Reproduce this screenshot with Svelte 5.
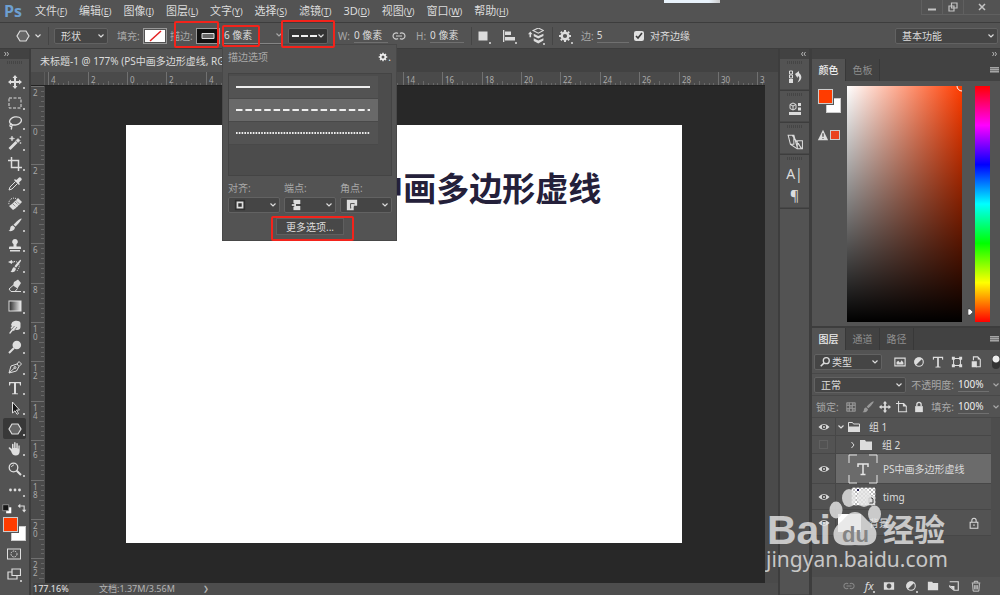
<script>
    const menus = [
        ['文件', 'F'], ['编辑', 'E'], ['图像', 'I'], ['图层', 'L'], ['文字', 'Y'], ['选择', 'S'],
        ['滤镜', 'T'], ['3D', 'D'], ['视图', 'V'], ['窗口', 'W'], ['帮助', 'H']
    ];

    // Icons are drawn on a 14 x 14 grid
    const icons = {
        move: '<path d="M7 0l2.500 3H8v3h3V4.500L14 7l-3 2.500V8H8v3h1.500L7 14l-2.500-3H6V8H3v1.500L0 7l3-2.500V6h3V3H4.500z"/>',
        marquee: '<rect x="1" y="2" width="12" height="10" fill="none" stroke="currentColor" stroke-dasharray="3 1.500"/>',
        lasso: '<g fill="none" stroke="currentColor" stroke-width="1.300"><ellipse cx="7.500" cy="5" rx="6" ry="4" transform="rotate(-12 7 5)"/><path d="M3 8c-2 1-1 3 .5 2.500S4 8 2.500 8M3.500 10.500c.5 1 .3 2-.5 3"/></g>',
        wand: '<path d="M0.500 12L7.500 5l2 2-7 7z"/><path d="M8 4.500L10 2.500l2 2L10 6.500zM4 0l.6 1.900L6.500 2.500l-1.900.6L4 5l-.6-1.900L1.500 2.500l1.900-.6zM12.500 0v2M11.500 1h2M12.500 6v2M11.500 7h2" stroke="currentColor" stroke-width=".6"/>',
        crop: '<path d="M3.500 0v10.500H14M0 3.500h10.500V14" fill="none" stroke="currentColor" stroke-width="1.500"/>',
        eyedropper: '<path d="M8 3l1-.5L10.500 1a1.800 1.800 0 0 1 2.600 2.600L11.500 5 11 6l1 1-1 1-5-5 1-1z"/><path d="M7.500 4.500L2 10l-1 3 3-1 5.500-5.500" fill="none" stroke="currentColor"/>',
        heal: '<path d="M4 7L10 1l4 4-6 6-3 2-4-4z" /><path d="M5 7l4 4M7 5l4 4M8 3.500l4 4" stroke="#666" stroke-dasharray="1 1"/><path d="M8 1.500C4 0 0 3 1 8" fill="none" stroke="currentColor" stroke-dasharray="1 1"/>',
        brush: '<path d="M13.500.5c.8.8-4.500 6.700-6 8L5.500 6.700C7 5 12.500-.3 13.500.5zM5 7.500l2 2C6.500 13 3 13.500.5 13c2-1 1.500-2.500 2-4 .5-1 1.500-1.500 2.500-1.500z"/>',
        stamp: '<path d="M7 1a2.800 2.800 0 0 1 1.500 5.200V8.500H12a1 1 0 0 1 1 1V11H1V9.500a1 1 0 0 1 1-1h3.500V6.200A2.800 2.800 0 0 1 7 1zM2 12h10v1.500H2z"/>',
        history: '<path d="M13 .8c.8.8-3.500 6.700-5 8L6.500 7.300C8 5.500 12 0 13 .8zM6 8l2 1.800C7.500 13 5 13.500 2.500 13c1.500-1 1.500-4 3.500-5zM0 3l4-2v1.200l3 .8-3 .8V5z"/><path d="M6 2.500C9 2 12 5 11 8.500L9 12" fill="none" stroke="currentColor" stroke-dasharray="1 1"/>',
        eraser: '<path d="M6 3l4-2.500L13 4 9.500 9.500 5 6.500z"/><path d="M5 6.500L1 10l2 2.500h4l2.500-3M3 12.500h10" fill="none" stroke="currentColor"/>',
        gradient: '<defs><linearGradient id="toolGradient"><stop stop-color="#292929"/><stop offset="1" stop-color="#eee"/></linearGradient></defs><rect x="1" y="2" width="12" height="10" fill="url(#toolGradient)" stroke="currentColor"/>',
        smudge: '<path d="M4 2.500C6 0 12 0 12.500 3v4c0 2-2 3.500-4 3L7 9.500 6 11l-1-.5-3 3.500-.8-1L4 9 2.500 8 4 6 3 5z"/><path d="M6.500 6L4 9M9 7l-2 2.500" stroke="#555" stroke-width=".7"/>',
        dodge: '<circle cx="8.800" cy="5" r="4.300"/><path d="M6 8l-5 5" stroke="currentColor" stroke-width="2"/>',
        pen: '<g fill="none" stroke="currentColor"><path d="M1 13l2-7 6-2 2 2.500L8.500 11zM9 4l2-2.500 2.500 2.500L11 6.500M1 13l5.500-5"/><circle cx="7" cy="7.500" r="1"/></g>',
        type: '<path d="M1 1h12v3.500h-1L11.500 2.300H8v9.900l2 .3v.8H4v-.8l2-.3V2.300H2.500L2 4.500H1z"/>',
        select: '<path d="M4.500 1l7 8H8.500l2 3.500-1.500.8-2-3.500L4.500 12z" fill="#171717" stroke="currentColor"/>',
        shape: '<path d="M4 2h6l3 5-3 5H4L1 7z" fill="#666" stroke="currentColor" stroke-width="1.200"/>',
        hand: '<path d="M3 9L.8 6.500c-.6-1 .6-1.600 1.200-1L4 7V2.500c0-1 1.400-1 1.500 0V6h.6V1c0-1.200 1.500-1.200 1.500 0v5h.7V1.800c0-1 1.400-1 1.500 0V6.500h.6V4c0-1 1.300-1 1.300 0v5c0 3-1.500 4.500-4 4.500S4 12 3 9z"/>',
        zoom: '<circle cx="5.500" cy="5.500" r="4.300" fill="none" stroke="currentColor" stroke-width="1.300"/><path d="M3.500 5C4 3.500 5 3 6 3" fill="none" stroke="currentColor"/><path d="M8.700 8.700L13 13" stroke="currentColor" stroke-width="2"/>',
        more: '<circle cx="2.500" cy="7" r="1.400"/><circle cx="7" cy="7" r="1.400"/><circle cx="11.500" cy="7" r="1.400"/>',
        mask: '<g fill="none" stroke="currentColor"><rect x=".5" y="2" width="13" height="10"/><circle cx="7" cy="7" r="3" stroke-dasharray="1.500 1"/></g>',
        screen: '<g fill="#535353" stroke="currentColor" stroke-width="1.200"><path d="M1 5h9v7H1z"/><path d="M5 2h8.500v6.500H5z"/></g>',
        swap: '<path d="M4 3.500h5.500v5" fill="none" stroke="currentColor" stroke-width="1.300"/><path d="M5 1v5L2 3.500zM7 8h5l-2.500 3z"/>',
        defaults: '<path d="M6 5h6v7H6z" fill="#fff"/><path d="M2 2h7v7H2z" fill="#171717" stroke="#999"/>',
        link: '<g fill="none" stroke="currentColor" stroke-width="1.200"><path d="M6 4.500C5 3.500 1 3.500 1 7s4 3.500 5 2.500M8 4.500c1-1 5-1 5 2.500s-4 3.500-5 2.500M4 7h6"/></g>',
        square: '<path d="M2.500 2.500h9v9h-9z"/>',
        align: '<path d="M1 1h1.300v12H1zM3 2.500h6v3.500H3zM3 8h10v3.500H3z"/>',
        arrange: '<path d="M9 0l4.500 2.200L9 4.500 4.500 2.200z" fill="none" stroke="currentColor"/><path d="M5 5l4 2 4.500-2v2L9 9.200 5 7.300zM5 9l4 2 4.500-2v2L9 13.500 5 11.300zM0 5.500L2 3l2 2.500H2.700V8H1.300V5.500z"/>',
        gear: '<circle cx="7" cy="7" r="3.300" fill="none" stroke="currentColor" stroke-width="2.400"/><g stroke="currentColor" stroke-width="2"><path d="M7 1v2M7 11v2M1 7h2M11 7h2M2.800 2.800L4 4M10 10l1.200 1.200M2.800 11.200L4 10M10 4l1.200-1.200"/></g>',
        historyPanel: '<g fill="none" stroke="currentColor"><path d="M1.500 1h3v3h-3zM1.500 5h3v3h-3z"/></g><path d="M1 9h4v4H1zM7 4l4-3v2c4 3 2.500 8-1.500 9.500 2-3 2.500-5.500.5-6.500L9.500 8z"/>',
        properties: '<path d="M5 1l3 1.500v4L5 8 2 6.500v-4zM2 2.500L5 4l3-1.500M5 4v4" fill="none" stroke="currentColor"/><path d="M10 1h3v3h-3zM10 5.500h3v3h-3zM1 10h12v3H1z"/>',
        copySource: '<g fill="none" stroke="currentColor" stroke-width=".9"><path d="M1 1h5v8H3zM6 1l3 11M9 6h4.500v7H9zM3 9l6 4M4.500 1L13 13M10 8l2 4"/></g>',
        image: '<path d="M1 2.500h12v9H1z" fill="none" stroke="currentColor" stroke-width="1.300"/><path d="M3 10V7l2-1.500L7 8l2-3 2 3v2z"/>',
        adjust: '<circle cx="7" cy="7" r="5" fill="none" stroke="currentColor" stroke-width="1.300"/><path d="M10.800 3.200a5.300 5.300 0 0 1-7.600 7.600z" transform="rotate(180 7 7)"/>',
        bounds: '<path d="M3 3h8v8H3z" fill="none" stroke="currentColor" stroke-width="1.200"/><path d="M1 1h3.500v3.500H1zM9.500 1H13v3.500H9.500zM1 9.500h3.500V13H1zM9.500 9.500H13V13H9.500z"/>',
        smart: '<path d="M4 5V1h5l3 3v8.500H7" fill="none" stroke="currentColor" stroke-width="1.300"/><path d="M2 6h6v7H2zM9 1v3h3z"/>',
        pixels: '<path d="M2 2h10v10H2zM2 5.300h10M2 8.600h10M5.300 2v10M8.600 2v10" fill="none" stroke="currentColor"/><path d="M2 2h3.300v3.300H2zM8.600 2H12v3.300H8.600zM5.300 5.300h3.300v3.300H5.300zM2 8.600h3.300V12H2zM8.600 8.600H12V12H8.600z" opacity=".5"/>',
        artboard: '<path d="M3 0v12.500h10M0 3h9l3 3v7" fill="none" stroke="currentColor" stroke-width="1.200"/><path d="M8 2.500l4.500 4H8z"/>',
        lock: '<path d="M2.500 6h9v7h-9z"/><path d="M4.500 6V4a2.500 2.500 0 0 1 5 0v2" fill="none" stroke="currentColor" stroke-width="1.500"/>',
        lockLine: '<path d="M2.500 6h9v7h-9zM4.500 6V4a2.500 2.500 0 0 1 5 0v2M7 8.500v2" fill="none" stroke="currentColor" stroke-width="1.200"/>',
        eye: '<path d="M.5 7Q7 0 13.500 7 7 14 .5 7z"/><circle cx="7" cy="7" r="2.600" fill="#484848"/><circle cx="7" cy="7" r="1.100"/>',
        folder: '<path d="M1 2h5l1 1.500h6V12H1z"/>',
        folderOpen: '<path d="M1.500 11.500v-9h4L6.500 4h6v7.500z" fill="none" stroke="currentColor"/><path d="M1 6.500h12V12H1z"/>',
        addMask: '<path fill-rule="evenodd" d="M1 2.500h12v9H1zM7 4.200a2.800 2.800 0 1 0 .01 0z"/>',
        newLayer: '<path d="M2 2h10v10H7L2 8V6" fill="none" stroke="currentColor" stroke-width="1.300"/><path d="M2 7h5.500v5z"/>',
        trash: '<path d="M2 3.500h10M5 3V1.500h4V3M3 4l.7 9h6.600L11 4M5.500 6v5M7 6v5M8.500 6v5" fill="none" stroke="currentColor"/>',
        warning: '<path d="M7 1l6 12H1z"/><path d="M7 5v4M7 10.500v1" stroke="#444" stroke-width="1.500"/>',
        search: '<circle cx="8.500" cy="5.500" r="3.500" fill="none" stroke="currentColor" stroke-width="1.500"/><path d="M6 8l-4 4" stroke="currentColor" stroke-width="1.800"/>',
        alignIn: '<path d="M1 1h12v12H1z" fill="#303030"/><path d="M4 4h6v6H4z" fill="none" stroke="currentColor" stroke-width="2"/>',
        cap: '<path d="M4 1h8v12H4z"/><path d="M7 6h6v2H7z" fill="#303030"/><path d="M1 5h4v4H1z" fill="#303030"/><path d="M2 6h4v2H2z"/>',
        corner: '<path d="M1 1h12v7H9v5H1z"/><path d="M5 5h5v1H6v5H5z" fill="#303030"/><path d="M6 6h3v3H6z"/>'
    };

    const tools = [
        ['move', '移动'], ['marquee', '矩形选框'], ['lasso', '套索'], ['wand', '魔棒'], ['crop', '裁剪'],
        ['eyedropper', '吸管'], ['heal', '修复画笔'], ['brush', '画笔'], ['stamp', '仿制图章'],
        ['history', '历史记录画笔'], ['eraser', '橡皮擦'], ['gradient', '渐变'], ['smudge', '涂抹'],
        ['dodge', '减淡'], ['pen', '钢笔'], ['type', '文字'], ['select', '路径选择'], ['shape', '多边形'],
        ['hand', '抓手'], ['zoom', '缩放'], ['more', '更多']
    ];

    // Ruler: one major mark every two units
    const STEP = 39.4;
    const minor = [1, 2, 3, 4, 5, 6, 7];
    const digits = (n) => String(Math.abs(n * 2)).split('');
    const markList = (from, length, origin) =>
        Array.from({ length: Math.max(0, Math.ceil((length - origin - 4) / STEP) - from) }, (_, i) => i + from);

    let viewWidth = $state(734);
    let viewHeight = $state(511);
    let marks = $derived(markList(-2, viewWidth - 13, 96));
    let vMarks = $derived(markList(-1, viewHeight - 14, 39));

    let strokeWidth = $state('6 像素');
    let width = $state('0 像素');
    let height = $state('0 像素');
    let sides = $state('5');
    let alignEdges = $state(true);
    let strokeStyle = $state('dash');
</script>

{#snippet icon(name, size = 14)}
    <svg class="icon" width={size} height={size} viewBox="0 0 14 14" fill="currentColor" aria-hidden="true">
        {@html icons[name]}
    </svg>
{/snippet}

{#snippet chevron()}
    <svg class="chevron" width="6" height="4" viewBox="0 0 6 4" aria-hidden="true">
        <path d="M.5 .5L3 3 5.500 .5" fill="none" stroke="currentColor" stroke-width="1.200" />
    </svg>
{/snippet}

{#snippet arrows(left)}
    <svg width="5" height="4" viewBox="0 0 5 4" aria-hidden="true">
        <path d={left ? 'M2 0L.5 2 2 4M4.500 0L3 2l1.500 2' : 'M.5 0L2 2 .5 4M3 0l1.500 2L3 4'} fill="none" stroke="#c4c4c4" stroke-width=".9" />
    </svg>
{/snippet}

{#snippet burger()}
    <button class="burger" aria-label="面板菜单"><svg width="9" height="7"><path d="M0 0h9v6H0z" fill="#777" /><path d="M0 .5h9M0 2.500h9M0 4.500h9" stroke="#a5a5a5" /></svg></button>
{/snippet}

<div class="app">
    <header class="menubar">
        <span class="logo">Ps</span>
        <nav>
            {#each menus as [name, key]}
                <button>{name}<small>(<u>{key}</u>)</small></button>
            {/each}
        </nav>
        <div class="window-buttons">
            <button aria-label="最小化"><svg width="10" height="10"><path d="M1 7.500h8" stroke="#c4c4c4" stroke-width="2" /></svg></button>
            <button aria-label="还原"><svg width="10" height="10"><path d="M3.500 1h5.500v5H3.500zM1 4h5v5H1z" fill="#535353" stroke="#c4c4c4" stroke-width="1.200" /></svg></button>
            <button aria-label="关闭"><svg width="10" height="10"><path d="M2 2l6 6M8 2L2 8" stroke="#c4c4c4" stroke-width="1.500" /></svg></button>
        </div>
    </header>

    <div class="options">
        <button class="preset" aria-label="工具预设">{@render icon('shape')}{@render chevron()}</button>
        <span class="drop mode">
            <select aria-label="工具模式"><option>形状</option></select>
            {@render chevron()}
        </span>
        <div class="field fill-field">
            填充:
            <button class="swatch" aria-label="填充颜色">
                <svg width="20" height="12"><path d="M0 0h20v12H0z" fill="#fff" /><path d="M5 11L16 1" stroke="#e32020" stroke-width="1.500" /></svg>
            </button>
        </div>
        <div class="field stroke-field">
            描边:
            <button class="swatch dark" aria-label="描边颜色">
                <svg width="20" height="12"><path d="M0 0h20v12H0z" fill="#111" /><path d="M4 3.500h12v5H4z" fill="#666" stroke="#ddd" /></svg>
            </button>
        </div>
        <span class="line-input stroke-width">
            <input aria-label="描边宽度" bind:value={strokeWidth} />
            {@render chevron()}
        </span>
        <span class="drop style">
            <select aria-label="描边类型" bind:value={strokeStyle}>
                <option value="solid" aria-label="实线"></option>
                <option value="dash" aria-label="虚线"></option>
                <option value="dot" aria-label="点线"></option>
            </select>
            <svg class="glyph" width="26" height="4"><path d="M0 2h25" stroke="#eee" stroke-width="2" stroke-dasharray="7 2" /></svg>
            {@render chevron()}
        </span>
        <label class="field size">W: <input bind:value={width} /></label>
        <button class="link" aria-label="链接宽高">{@render icon('link')}</button>
        <label class="field size">H: <input bind:value={height} /></label>
        <div class="ops">
            <button class="corner" aria-label="路径操作">{@render icon('square')}</button>
            <button class="corner" aria-label="路径对齐">{@render icon('align')}</button>
            <button class="corner" aria-label="路径排列">{@render icon('arrange', 16)}</button>
        </div>
        <button class="corner" aria-label="设置">{@render icon('gear')}</button>
        <label class="field sides">边: <input bind:value={sides} /></label>
        <label class="field check"><input type="checkbox" bind:checked={alignEdges} /> 对齐边缘</label>
        <span class="drop workspace-select">
            <select aria-label="工作区"><option>基本功能</option></select>
            {@render chevron()}
        </span>
    </div>

    <div class="workspace">
        <aside class="toolbar">
            <div class="strip left">{@render arrows(false)}</div>
            <div class="grip"></div>
            <div class="tools">
                {#each tools as [name, label]}
                    <button class:active={name === 'shape'} class="corner" aria-label={label}>{@render icon(name)}</button>
                {/each}
            </div>
            <div class="swap">
                <button aria-label="默认颜色">{@render icon('defaults', 12)}</button>
                <button aria-label="切换颜色">{@render icon('swap', 12)}</button>
            </div>
            <div class="colors"><i class="bg"></i><i class="fg"></i></div>
            <button class="below" aria-label="快速蒙版">{@render icon('mask')}</button>
            <button class="below corner" aria-label="屏幕模式">{@render icon('screen')}</button>
        </aside>

        <main class="document">
            <div class="tabs"><div class="tab">未标题-1 @ 177% (PS中画多边形虚线, RGB/8#)</div></div>
            <div class="view" bind:clientWidth={viewWidth} bind:clientHeight={viewHeight}>
                <svg class="ruler-top">
                    <path d="M13.500 0v14" stroke="#5c5c5c" />
                    {#each marks as m}
                        {@const x = Math.round(96 + m * STEP)}
                        <path d="M{x + 0.5} 0v14" stroke="#707070" />
                        <text x={x + 3} y="11">{Math.abs(m * 2)}</text>
                        {#each minor as k}
                            <path d="M{Math.round(x + (k * STEP) / 8) + 0.5} {k === 4 ? 9 : 11}V14" stroke="#686868" />
                        {/each}
                    {/each}
                </svg>
                <div class="ruler-left">
                    <svg>
                        {#each vMarks as m}
                            {@const y = Math.round(39 + m * STEP)}
                            <path d="M0 {y + 0.5}h13" stroke="#707070" />
                            {#each digits(m) as d, i}
                                <text x="2" y={y + 10 + i * 8}>{d}</text>
                            {/each}
                            {#each minor as k}
                                <path d="M{k === 4 ? 8 : 10} {Math.round(y + (k * STEP) / 8) + 0.5}H13" stroke="#686868" />
                            {/each}
                        {/each}
                    </svg>
                </div>
                <div class="canvas">
                    <div class="artboard"><h1>PS中画多边形虚线</h1></div>
                </div>
            </div>
            <footer class="status">
                <input aria-label="缩放比例" value="177.16%" />
                <span>文档:1.37M/3.56M</span>
                <button aria-label="状态选项">❯</button>
            </footer>
        </main>

        <aside class="dock">
            <div class="strip">{@render arrows(true)}</div>
            <div class="group"><div class="grip"></div><button aria-label="历史记录">{@render icon('historyPanel')}</button></div>
            <div class="group"><div class="grip"></div><button aria-label="属性">{@render icon('properties')}</button></div>
            <div class="group"><div class="grip"></div><button aria-label="仿制源">{@render icon('copySource', 16)}</button></div>
            <div class="group text-group"><div class="grip"></div><button class="glyph-button">A|</button><button class="glyph-button">¶</button></div>
            <div class="group rest"></div>
        </aside>

        <aside class="panels">
            <div class="strip">{@render arrows(false)}</div>
            <section>
                <div class="panel-tabs">
                    <button class="on">颜色</button><button>色板</button>
                    {@render burger()}
                </div>
                <div class="color-body">
                    <div class="current">
                        <div class="colors"><i class="bg"></i><i class="fg"></i></div>
                        <div class="gamut">{@render icon('warning', 12)}<i></i></div>
                    </div>
                    <div class="field-2d">
                        <svg width="6" height="6"><path d="M1 0a5 5 0 0 0 5 5" fill="none" stroke="#fff" /></svg>
                    </div>
                    <div class="hue"><svg width="6" height="8"><path d="M0 1h2l3 3-3 3H0z" fill="#fff" stroke="#222" stroke-width=".5" /></svg></div>
                </div>
            </section>
            <section class="layers">
                <div class="panel-tabs">
                    <button class="on">图层</button><button>通道</button><button>路径</button>
                    {@render burger()}
                </div>
                <div class="row filter">
                    <span class="drop kind">
                        <span class="lens">{@render icon('search', 12)}</span>
                        <select aria-label="图层过滤"><option>类型</option></select>
                        {@render chevron()}
                    </span>
                    <div class="filter-icons">
                        {#each ['image', 'adjust', 'type', 'bounds', 'smart'] as name}
                            <button aria-label={name}>{@render icon(name, 12)}</button>
                        {/each}
                    </div>
                    <i class="toggle"></i>
                </div>
                <div class="row">
                    <span class="drop blend">
                        <select aria-label="混合模式"><option>正常</option></select>
                        {@render chevron()}
                    </span>
                    <label class="percent">不透明度: <input value="100%" />{@render chevron()}</label>
                </div>
                <div class="row">
                    <span class="lock-label">锁定:</span>
                    <div class="locks">
                        {#each ['pixels', 'brush', 'move', 'artboard', 'lock'] as name, i}
                            <button class:off={i < 2} aria-label={name}>{@render icon(name, 12)}</button>
                        {/each}
                    </div>
                    <label class="percent">填充: <input value="100%" />{@render chevron()}</label>
                </div>
                <ul class="list">
                    <li>
                        <button class="vis" aria-label="可见">{@render icon('eye', 12)}</button>
                        <div class="item">{@render chevron()}{@render icon('folderOpen')}<span class="name">组 1</span></div>
                    </li>
                    <li>
                        <button class="vis" aria-label="隐藏"><i class="empty"></i></button>
                        <div class="item nested"><svg width="4" height="8"><path d="M.5 1L3 4 .5 7" fill="none" stroke="#ddd" /></svg>{@render icon('folder')}<span class="name">组 2</span></div>
                    </li>
                    <li class="tall selected">
                        <button class="vis" aria-label="可见">{@render icon('eye', 12)}</button>
                        <div class="item thumb">
                            <svg width="30" height="30" fill="none" stroke="#e6e6e6"><path d="M1 9V1h8M21 1h8v8M29 21v8h-8M9 29H1v-8" /><path d="M10 13v-3h10v3M15 10v11M12.500 20.500h5" stroke-width="1.500" /></svg>
                            <span class="name">PS中画多边形虚线</span>
                        </div>
                    </li>
                    <li class="mid">
                        <button class="vis" aria-label="可见">{@render icon('eye', 12)}</button>
                        <div class="item thumb timg">
                            <svg width="25" height="19">
                                <defs><pattern id="checker" width="4" height="4" patternUnits="userSpaceOnUse"><path d="M0 0h4v4H0z" fill="#fff" /><path d="M0 0h2v2H0zM2 2h2v2H2z" fill="#bbb" /></pattern></defs>
                                <path d="M0 0h25v19H0z" fill="url(#checker)" stroke="#222" /><path d="M6 2h2v2H6z" fill="#222050" />
                                <path d="M15 9h9v9h-9z" fill="#ddd" /><path d="M18 16v-5h3l1 1v4z" fill="none" stroke="#444" />
                            </svg>
                            <span class="name">timg</span>
                        </div>
                    </li>
                    <li class="mid">
                        <button class="vis" aria-label="可见">{@render icon('eye', 12)}</button>
                        <div class="item back"><i class="white"></i><span class="name">背景</span><span class="locked">{@render icon('lockLine', 12)}</span></div>
                    </li>
                </ul>
                <div class="layer-actions">
                    <button class="dim" aria-label="链接图层">{@render icon('link', 12)}</button>
                    <button class="corner fx">fx</button>
                    <button aria-label="蒙版">{@render icon('addMask', 12)}</button>
                    <button class="corner" aria-label="调整图层">{@render icon('adjust', 12)}</button>
                    <button aria-label="新建组">{@render icon('folder', 12)}</button>
                    <button aria-label="新建图层">{@render icon('newLayer', 12)}</button>
                    <button aria-label="删除">{@render icon('trash', 12)}</button>
                </div>
            </section>
        </aside>
    </div>

    <div class="popup">
        <div class="popup-head">描边选项<button class="popup-gear" aria-label="描边设置">{@render icon('gear', 10)}.</button></div>
        <div class="strokes">
            {#each [['solid', ''], ['dash', '6.500 2.900'], ['dot', '1.600 1.200']] as [id, dash]}
                <button class:chosen={strokeStyle === id} aria-label={id} onclick={() => (strokeStyle = id)}>
                    <svg width="134" height="4"><path d="M0 2h134" stroke="#eee" stroke-width="2" stroke-dasharray={dash} /></svg>
                </button>
            {/each}
        </div>
        <div class="joins">
            {#each [['对齐:', 'alignIn'], ['端点:', 'cap'], ['角点:', 'corner']] as [label, name]}
                <label>{label}
                    <span class="drop join">
                        <select><option aria-label={name}></option></select>
                        <span class="glyph">{@render icon(name, 12)}</span>
                        {@render chevron()}
                    </span>
                </label>
            {/each}
        </div>
        <button class="more">更多选项...</button>
    </div>

    <div class="toast"></div>
    <div class="mark mark-stroke"></div>
    <div class="mark mark-width"></div>
    <div class="mark mark-style"></div>
    <div class="mark mark-more"></div>

    <svg class="watermark" width="185" height="92" viewBox="765 485 185 92">
        <g fill="#e4e4e4" fill-opacity=".82">
            <text x="767" y="544" class="brand">Bai</text>
            <ellipse cx="849" cy="498" rx="7" ry="9" />
            <ellipse cx="864" cy="498" rx="7" ry="9" />
            <ellipse cx="836" cy="510" rx="6.500" ry="8.500" />
            <ellipse cx="874.500" cy="514" rx="6.500" ry="8.500" />
            <path d="M855 512c6 0 9 5 13 9 6 5 10 9 8 17-2 7-9 8-21 7-12 1-19 0-21-7-2-8 2-12 8-17 4-4 7-9 13-9z" />
            <text x="883" y="541" class="cn">经验</text>
            <text x="766" y="567" class="url">jingyan.baidu.com</text>
        </g>
        <text x="842" y="542" class="du">du</text>
    </svg>
</div>

<style>
    :global(body) {
        background: #535353;
    }

    .app {
        position: relative;
        display: flex;
        flex-direction: column;
        min-height: 100vh;
        overflow: hidden;
        background: #535353;
        color: #dcdcdc;
        font-family: 'Noto Sans', 'Noto Sans CJK SC', sans-serif;
        font-size: 10px;
        line-height: 14px;
    }

    .app * {
        box-sizing: border-box;
    }

    button, input, select {
        margin: 0;
        padding: 0;
        border: 0;
        background: none;
        color: inherit;
        font: inherit;
    }

    select {
        appearance: none;
        width: 100%;
        height: 100%;
        padding-left: 6px;
    }

    svg {
        display: block;
        flex: none;
    }

    i {
        display: block;
    }

    .menubar {
        display: flex;
        height: 23px;
        border-bottom: 1px solid #3d3d3d;
    }

    .logo {
        width: 30px;
        padding-left: 4px;
        color: #6d9fd0;
        font: bold 16px/22px 'Open Sans', sans-serif;
    }

    nav {
        display: flex;
        gap: 12px;
        padding-left: 5px;
        font-size: 11px;
    }

    nav small {
        font-size: 9px;
    }

    .window-buttons {
        display: flex;
        height: 15px;
        margin-left: auto;
        border: 1px solid #606060;
        border-width: 0 0 1px 1px;
    }

    .window-buttons button {
        display: grid;
        place-items: center;
        width: 21px;
        border-right: 1px solid #606060;
    }

    .window-buttons button:last-child {
        width: 36px;
        border: 0;
    }

    .options {
        display: flex;
        align-items: center;
        height: 26px;
        border-bottom: 1px solid #3d3d3d;
        color: #a8a8a8;
    }

    .options input, .options select {
        color: #dcdcdc;
    }

    .preset {
        display: flex;
        align-items: center;
        gap: 5px;
        width: 49px;
        height: 18px;
        padding-left: 16px;
        border-right: 1px solid #454545;
        color: #dcdcdc;
    }

    .drop {
        position: relative;
        display: block;
        height: 16px;
        border: 1px solid #626262;
        border-radius: 2px;
        background: #454545;
        color: #dcdcdc;
    }

    .drop .chevron {
        position: absolute;
        top: 5px;
        right: 3px;
        pointer-events: none;
    }

    .drop .glyph {
        position: absolute;
        top: 5px;
        left: 3px;
        pointer-events: none;
    }

    .mode {
        width: 54px;
        margin-left: 5px;
    }

    .field {
        display: flex;
        align-items: center;
        gap: 3px;
        white-space: nowrap;
    }

    .fill-field {
        width: 53px;
        margin-left: 9px;
    }

    .stroke-field {
        width: 52px;
    }

    .swatch {
        padding: 1px;
        border: 1px solid #999;
    }

    .dark {
        background: #111;
    }

    .line-input {
        display: flex;
        align-items: center;
        width: 61px;
        height: 16px;
        padding-left: 2px;
        border-bottom: 1px solid #858585;
    }

    .line-input input {
        width: 52px;
    }

    .style {
        width: 40px;
        margin-left: 5px;
        background: #333;
    }

    .size {
        width: 52px;
        margin-left: 10px;
        gap: 4px;
    }

    .size input {
        width: 34px;
        border-bottom: 1px solid #707070;
    }

    .link {
        margin-left: 2px;
        color: #ccc;
    }

    .ops {
        display: flex;
        gap: 12px;
        height: 18px;
        align-items: center;
        margin: 0 5px 0 3px;
        padding: 0 8px 0 4px;
        border: 1px solid #454545;
        border-width: 0 1px;
        color: #dcdcdc;
    }

    .options > .corner {
        color: #dcdcdc;
    }

    .corner {
        position: relative;
    }

    .corner::after {
        content: '';
        position: absolute;
        right: -1px;
        bottom: -1px;
        width: 2px;
        height: 2px;
        background: #bbb;
    }

    .sides {
        width: 50px;
        margin-left: 9px;
    }

    .sides input {
        width: 32px;
        border-bottom: 1px solid #707070;
    }

    .check {
        gap: 6px;
        margin-left: 3px;
        color: #dcdcdc;
    }

    .check input {
        width: 10px;
        height: 10px;
        accent-color: #e0e0e0;
    }

    .workspace-select {
        width: 103px;
        margin: 0 2px 0 auto;
    }

    .workspace {
        display: grid;
        grid-template-columns: 29px 1fr 29px 191px;
        flex: 1;
        background: #3d3d3d;
    }

    .strip {
        display: flex;
        align-items: center;
        justify-content: flex-end;
        height: 10px;
        padding-right: 3px;
        background: #424242;
    }

    .strip.left {
        justify-content: flex-start;
        padding-left: 4px;
    }

    .grip {
        width: 15px;
        height: 3px;
        margin: 2px auto 0;
        background: repeating-linear-gradient(90deg, #454545 0 1px, #535353 1px 2px);
    }

    .toolbar {
        display: flex;
        flex-direction: column;
        background: #535353;
        color: #dedede;
    }

    .tools {
        display: flex;
        flex-direction: column;
        height: 428px;
        margin-top: 8px;
    }

    .tools button {
        display: grid;
        flex: 1;
        place-items: center;
        width: 23px;
        margin-left: 3px;
        border-radius: 2px;
    }

    .tools .corner::after {
        right: 1px;
        bottom: 3px;
    }

    .tools .active {
        background: #383838;
    }

    .swap {
        display: flex;
        gap: 3px;
        padding: 3px 0 0 1px;
    }

    .colors {
        position: relative;
        width: 23px;
        height: 24px;
        margin: 2px 0 0 3px;
    }

    .colors i {
        position: absolute;
        width: 15px;
        height: 15px;
        border: 1px solid #ccc;
    }

    .colors .fg {
        top: 0;
        left: 0;
        background: #ff3c00;
        outline: 1px solid #555;
    }

    .colors .bg {
        right: 0;
        bottom: 0;
        background: #fff;
    }

    .below {
        width: 14px;
        margin: 6px 0 0 7px;
    }

    .document {
        display: flex;
        flex-direction: column;
        min-width: 0;
        padding: 0 2px;
    }

    .tabs {
        display: flex;
        height: 23px;
        background: #424242;
    }

    .tab {
        padding: 0 9px;
        background: #535353;
        line-height: 24px;
        white-space: nowrap;
    }

    .view {
        display: grid;
        grid-template: 14px 1fr / 14px 1fr;
        flex: 1;
        padding-right: 13px;
        background: #4a4a4a;
    }

    .ruler-top {
        grid-column: 1 / 3;
        width: 100%;
        height: 14px;
        overflow: hidden;
        border-bottom: 1px solid #222;
    }

    .ruler-left {
        position: relative;
        overflow: hidden;
    }

    .ruler-left svg {
        position: absolute;
        inset: 0;
        width: 100%;
        height: 100%;
    }

    .view text {
        fill: #a8a8a8;
        font-size: 8px;
    }

    .canvas {
        overflow: hidden;
        background: #282828;
    }

    .artboard {
        width: 556px;
        height: 418px;
        margin: 39px 0 0 81px;
        padding: 38px 0 0 202px;
        background: #fff;
    }

    h1 {
        margin: 0;
        color: #24203a;
        font: bold 33px/48px 'Noto Sans CJK SC', sans-serif;
        white-space: nowrap;
    }

    .status {
        display: flex;
        align-items: center;
        height: 12px;
        padding-left: 2px;
        background: #4d4d4d;
        color: #b4b4b4;
        font-size: 9px;
        line-height: 12px;
    }

    .status input {
        width: 36px;
        height: 12px;
        background: #444;
        color: #e4e4e4;
    }

    .status span {
        width: 104px;
        margin-left: 30px;
    }

    .status button {
        font-size: 7px;
    }

    .dock {
        display: flex;
        flex-direction: column;
    }

    .group {
        display: flex;
        flex-direction: column;
        align-items: center;
        gap: 6px;
        height: 31px;
        margin-bottom: 1px;
        border-bottom: 1px solid #484848;
        background: #535353;
    }

    .text-group {
        height: 53px;
    }

    .glyph-button {
        height: 16px;
        font-size: 14px;
        line-height: 16px;
    }

    .rest {
        flex: 1;
        margin: 0;
    }

    .panels {
        display: flex;
        flex-direction: column;
        padding-left: 3px;
        min-width: 0;
    }

    section {
        background: #535353;
    }

    .layers {
        display: flex;
        flex: 1;
        flex-direction: column;
        margin-top: 2px;
    }

    .panel-tabs {
        display: flex;
        height: 22px;
        background: #424242;
        color: #8f8f8f;
    }

    .panel-tabs button {
        width: 34px;
        border-right: 1px solid #383838;
    }

    .panel-tabs .on {
        background: #535353;
        color: #eee;
        font-weight: 500;
    }

    .panel-tabs .burger {
        width: 10px;
        margin-left: auto;
        border: 0;
    }

    .color-body {
        display: flex;
        height: 245px;
        padding: 5px 10px 4px 3px;
    }

    .current {
        width: 32px;
        padding-top: 1px;
    }

    .gamut {
        display: flex;
        gap: 1px;
        margin-top: 16px;
        padding-left: 2px;
    }

    .gamut i {
        width: 10px;
        height: 10px;
        margin-top: 1px;
        border: 1px solid #ccc;
        background: #ea421c;
    }

    .field-2d {
        flex: 1;
        margin-right: 13px;
        background: linear-gradient(transparent, #000), linear-gradient(90deg, #fff, #ff3c00);
    }

    .field-2d svg {
        margin-left: auto;
    }

    .hue {
        position: relative;
        width: 15px;
        background: linear-gradient(#f00, #f0f, #00f, #0ff, #0f0, #ff0, #f00);
    }

    .hue svg {
        position: absolute;
        bottom: 6px;
        left: -7px;
    }

    .row {
        display: flex;
        align-items: center;
        height: 22px;
        padding-left: 2px;
        border-bottom: 1px solid #484848;
        color: #a8a8a8;
        white-space: nowrap;
    }

    .filter {
        height: 24px;
    }

    .kind {
        width: 68px;
    }

    .kind select {
        padding-left: 17px;
    }

    .lens {
        position: absolute;
        top: 1px;
        left: 4px;
    }

    .filter-icons {
        display: flex;
        gap: 7px;
        margin-left: 12px;
        color: #ddd;
    }

    .toggle {
        width: 8px;
        height: 14px;
        margin-left: auto;
        border-radius: 4px;
        background: radial-gradient(circle at 4px 4px, #eee 3px, #333 4px);
    }

    .blend {
        width: 92px;
    }

    .percent {
        display: flex;
        align-items: center;
        gap: 4px;
        margin-left: auto;
    }

    .percent input {
        width: 31px;
        color: #eee;
        border-bottom: 1px solid #707070;
    }

    .percent .chevron {
        margin-right: 1px;
    }

    .lock-label {
        margin-left: 2px;
    }

    .locks {
        display: flex;
        gap: 5px;
        margin-left: 6px;
        color: #ddd;
    }

    .locks .off {
        color: #999;
    }

    .list {
        flex: 1;
        margin: 0;
        padding: 0 9px 0 0;
        background: #4d4d4d;
        list-style: none;
    }

    li {
        display: flex;
        height: 18px;
        border-bottom: 1px solid #474747;
        background: #535353;
    }

    .tall {
        height: 30px;
    }

    .mid {
        height: 26px;
    }

    .vis {
        display: grid;
        place-items: center;
        width: 24px;
        border-right: 1px solid #474747;
        background: #535353;
    }

    .empty {
        width: 9px;
        height: 9px;
        border: 1px solid #616161;
    }

    .item {
        display: flex;
        flex: 1;
        align-items: center;
        gap: 3px;
        padding-left: 2px;
    }

    .nested {
        gap: 4px;
        padding-left: 15px;
    }

    .item .name {
        margin-left: 5px;
        white-space: nowrap;
    }

    .thumb {
        gap: 0;
        padding-left: 12px;
    }

    .timg {
        padding-left: 15px;
    }

    .timg .name {
        margin-left: 7px;
    }

    .selected .item {
        background: #6b6b6b;
    }

    .white {
        width: 23px;
        height: 18px;
        background: #fff;
    }

    .locked {
        margin: 0 11px 0 auto;
    }

    .layer-actions {
        display: flex;
        align-items: center;
        justify-content: space-between;
        height: 18px;
        padding: 0 18px 0 31px;
    }

    .fx {
        font: italic 11px/12px 'Noto Sans', sans-serif;
    }

    .dim {
        color: #888;
    }

    .popup {
        position: absolute;
        top: 44px;
        left: 222px;
        width: 175px;
        padding: 5px 5px 5px;
        border: 1px solid #484848;
        background: #535353;
        color: #a8a8a8;
    }

    .popup-head {
        display: flex;
        justify-content: space-between;
        height: 23px;
    }

    .popup-gear {
        display: flex;
        align-items: center;
        height: 14px;
        color: #eee;
    }

    .strokes {
        height: 103px;
        margin-right: -1px;
        padding: 2px 13px 0 0;
        border: 1px solid #444;
        background: #4c4c4c;
    }

    .strokes button {
        display: flex;
        align-items: center;
        width: 100%;
        height: 23px;
        padding-left: 7px;
        border-bottom: 1px solid #494949;
        background: #535353;
    }

    .strokes .chosen {
        background: #696969;
    }

    .joins {
        display: flex;
        gap: 4px;
        padding-top: 5px;
    }

    .joins label {
        width: 52px;
    }

    .join {
        width: 52px;
        margin-top: 2px;
    }

    .join .glyph {
        top: 1px;
        left: 5px;
    }

    .more {
        display: block;
        width: 68px;
        height: 17px;
        margin: 5px 0 0 48px;
        border: 1px solid #5f5f5f;
        background: #484848;
        color: #dcdcdc;
        white-space: nowrap;
    }

    .toast {
        position: absolute;
        top: 0;
        left: 664px;
        width: 56px;
        height: 3px;
        background: linear-gradient(90deg, #e9f3fc 80%, #ccc);
    }

    .mark {
        position: absolute;
        border: 2px solid #f3231b;
        border-radius: 2px;
        pointer-events: none;
    }

    .mark-stroke {
        top: 21px;
        left: 174px;
        width: 45px;
        height: 27px;
    }

    .mark-width {
        top: 25px;
        left: 222px;
        width: 38px;
        height: 22px;
    }

    .mark-style {
        top: 20px;
        left: 281px;
        width: 54px;
        height: 28px;
    }

    .mark-more {
        top: 216px;
        left: 271px;
        width: 83px;
        height: 25px;
    }

    .watermark {
        position: absolute;
        top: 485px;
        left: 765px;
        pointer-events: none;
    }

    .brand {
        font: bold 41px 'Liberation Sans', sans-serif;
    }

    .cn {
        font: bold 31px 'Noto Sans CJK SC', sans-serif;
    }

    .url {
        font: 21px 'Noto Sans', sans-serif;
    }

    .du {
        fill: #858585;
        font: bold 22px 'Liberation Sans', sans-serif;
    }
</style>
